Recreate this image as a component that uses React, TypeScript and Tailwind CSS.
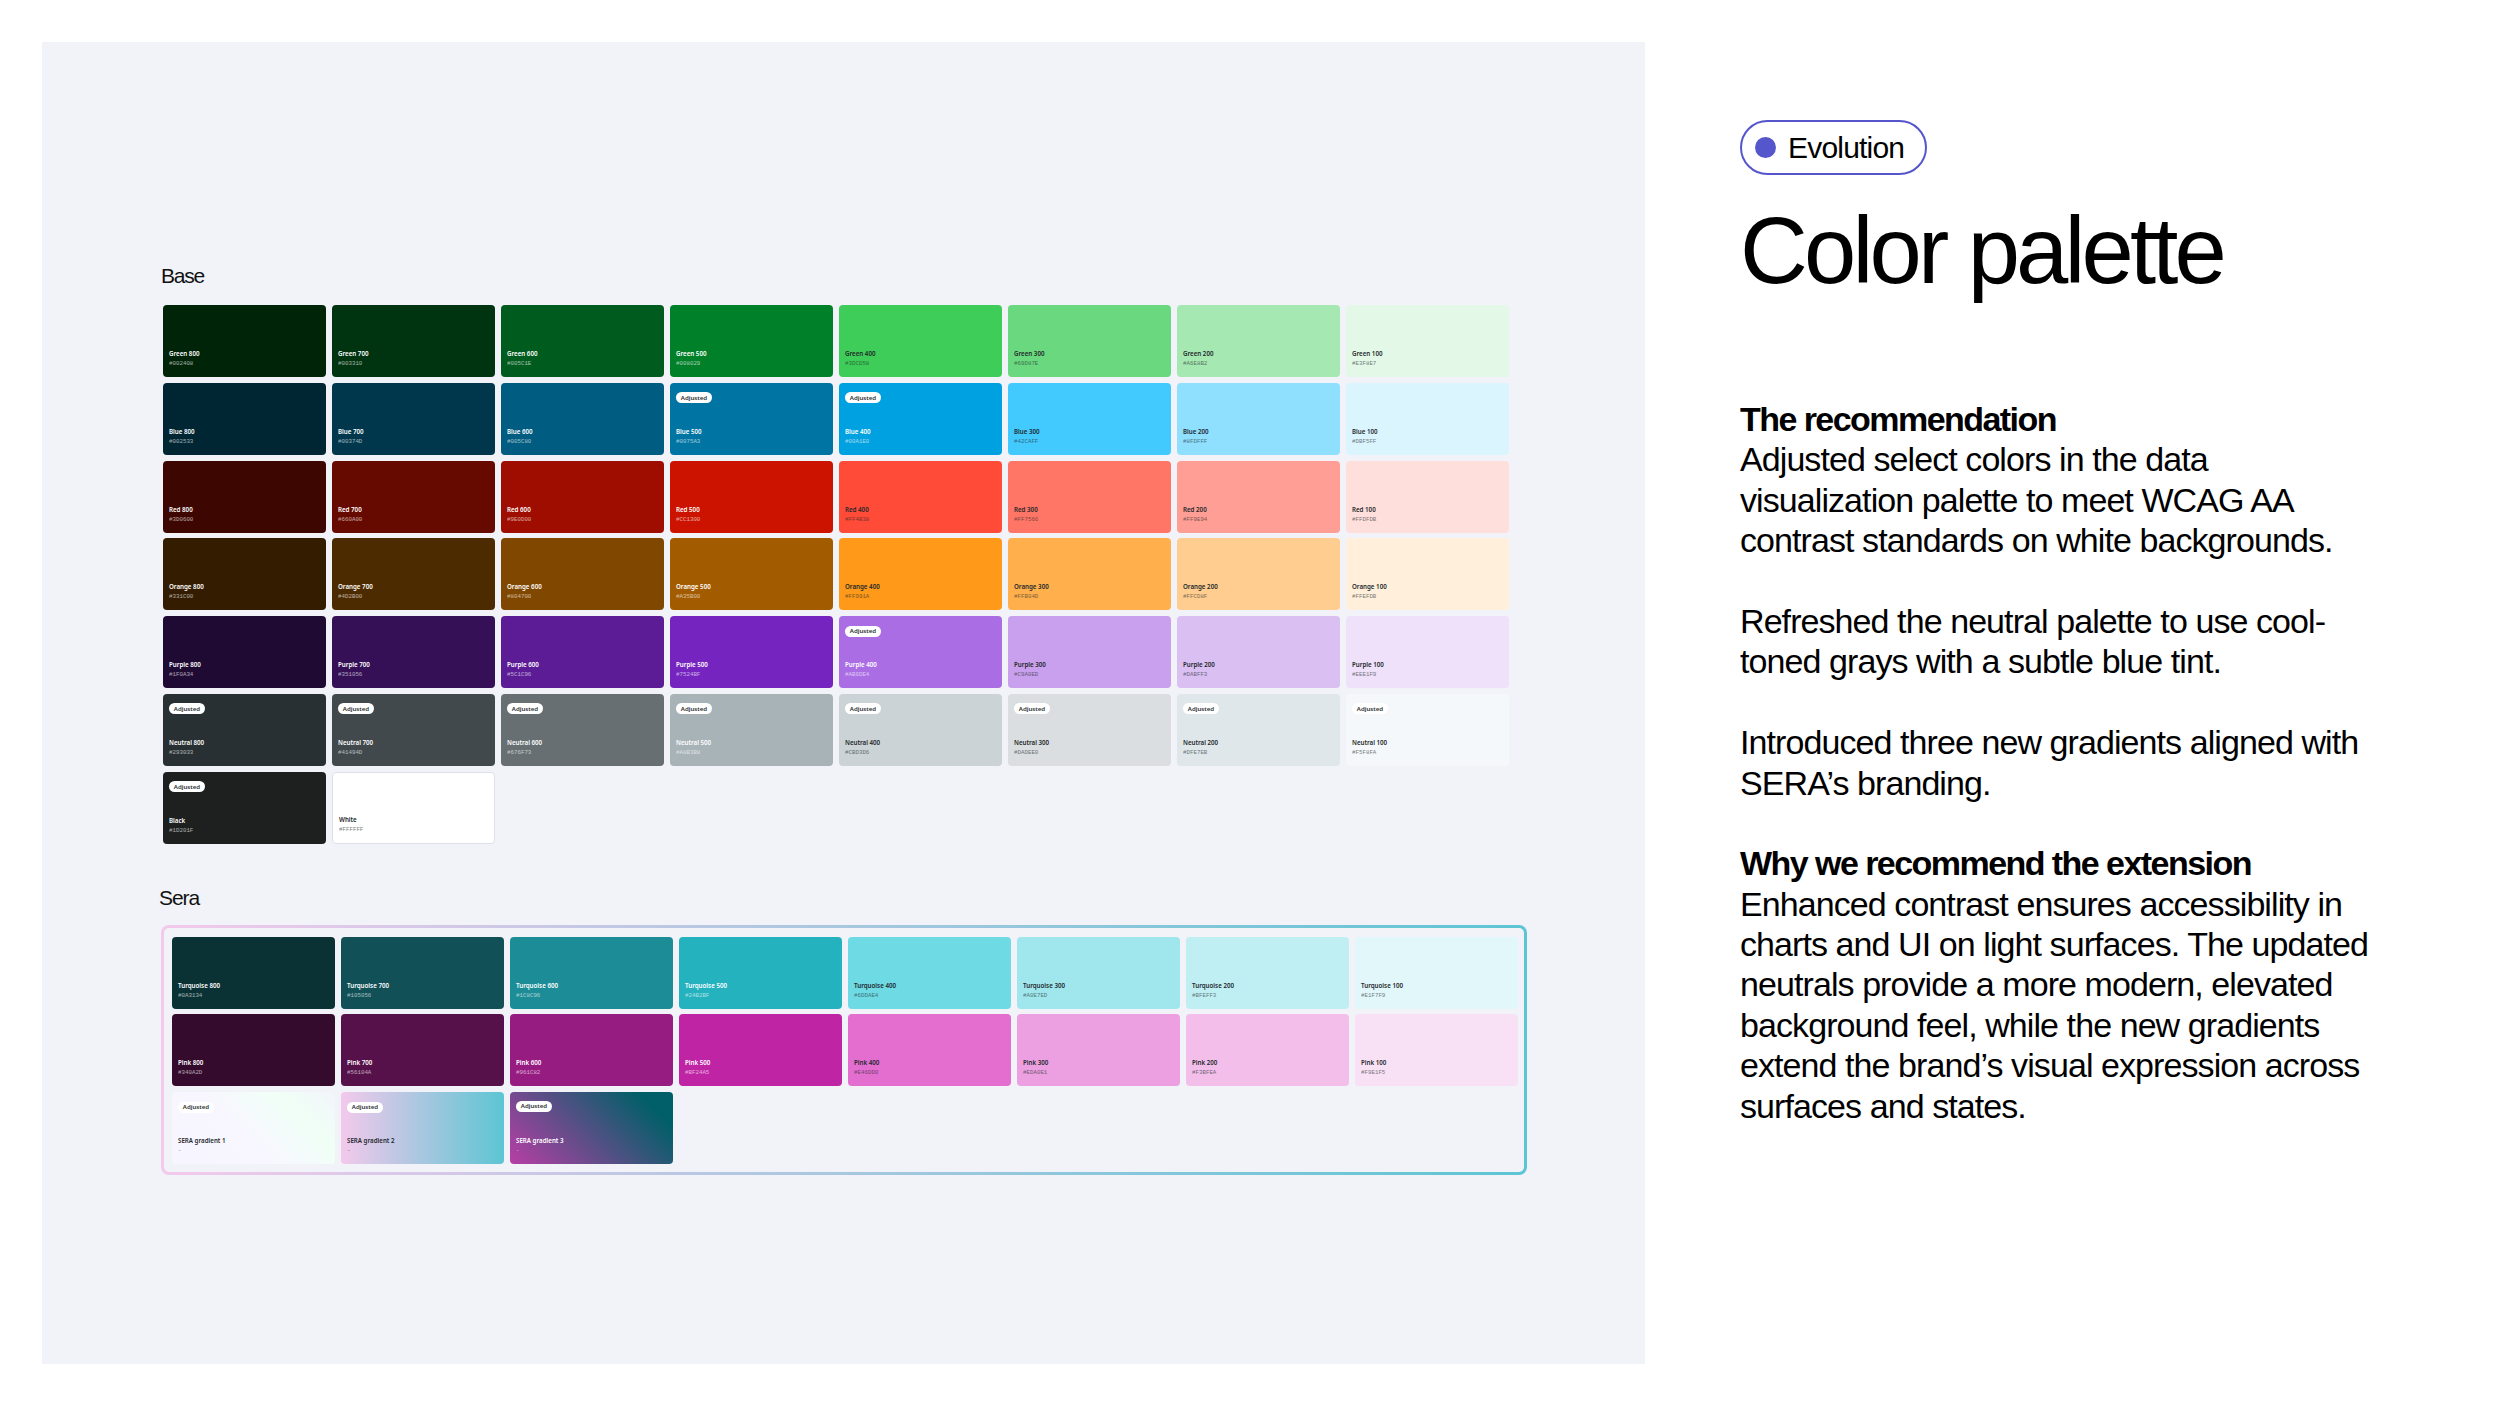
type S = { n: string; h: string; a?: boolean; g?: string };
const names = (p: string, hs: string[], adj: number[] = []): S[] =>
  hs.map((h, i) => ({ n: `${p} ${800 - i * 100}`, h, a: adj.includes(i) }));

const rows: S[][] = [
  names("Green", ["#002408", "#003310", "#005C1E", "#008029", "#3DCD58", "#69D87E", "#A6E8B2", "#E3F8E7"]),
  names("Blue", ["#002533", "#00374D", "#005C80", "#0075A3", "#00A1E0", "#42CAFF", "#8FDFFF", "#DBF5FF"], [3, 4]),
  names("Red", ["#3D0600", "#660A00", "#9E0D00", "#CC1300", "#FF4B38", "#FF7566", "#FF9E94", "#FFDFDB"]),
  names("Orange", ["#331C00", "#4D2B00", "#804700", "#A35B00", "#FF991A", "#FFB04D", "#FFCD8F", "#FFEFDB"]),
  names("Purple", ["#1F0A34", "#351056", "#5C1C96", "#7524BF", "#AB6DE4", "#C9A0ED", "#DABFF3", "#EEE1F9"], [4]),
  names("Neutral", ["#293033", "#41494D", "#676F73", "#A8B3B8", "#CBD3D6", "#DADEE0", "#DFE7EB", "#F5F8FA"], [0, 1, 2, 3, 4, 5, 6, 7]),
  [
    { n: "Black", h: "#1D201F", a: true },
    { n: "White", h: "#FFFFFF" },
  ],
];
const sera: S[][] = [
  names("Turquoise", ["#0A3134", "#105056", "#1C8C96", "#24B2BF", "#6DDAE4", "#A0E7ED", "#BFEFF3", "#E1F7F9"]),
  names("Pink", ["#340A2D", "#56104A", "#961C82", "#BF24A5", "#E46DD0", "#EDA0E1", "#F3BFEA", "#F9E1F5"]),
  [
    { n: "SERA gradient 1", h: "-", a: true, g: "bg-[linear-gradient(45deg,#f7f5ff_0%,#f8f7ff_45%,#f0fff6_75%,#f2f5fb_100%)]" },
    { n: "SERA gradient 2", h: "-", a: true, g: "bg-[linear-gradient(90deg,#f3c9ec_0%,#5cc5d3_100%)]" },
    { n: "SERA gradient 3", h: "-", a: true, g: "bg-[linear-gradient(45deg,#b83ea6_0%,#005f68_85%)]" },
  ],
];

const darkText = new Set([
  "Green 400", "Green 300", "Green 200", "Green 100", "Blue 300", "Blue 200", "Blue 100",
  "Red 400", "Red 300", "Red 200", "Red 100", "Orange 400", "Orange 300", "Orange 200", "Orange 100",
  "Purple 300", "Purple 200", "Purple 100", "Neutral 400", "Neutral 300", "Neutral 200", "Neutral 100",
  "White", "Turquoise 400", "Turquoise 300", "Turquoise 200", "Turquoise 100",
  "Pink 400", "Pink 300", "Pink 200", "Pink 100", "SERA gradient 1", "SERA gradient 2",
]);

function Swatch({ s }: { s: S }) {
  const dark = darkText.has(s.n);
  return (
    <div
      className={`relative flex h-[72px] w-[163px] shrink-0 flex-col rounded-[4px] pb-[8px] pl-[6px] font-['Noto_Sans',sans-serif] ${s.g ?? ""} ${s.n === "White" ? "border border-[#dde0e8]" : ""} ${dark ? "text-[#23282b]" : "text-white"}`}
      style={s.g ? undefined : { backgroundColor: s.h }}
    >
      {s.a && (
        <span
          className={`absolute left-[6px] flex h-[11px] w-[36px] items-center justify-center rounded-full bg-white text-[6.1px] font-semibold text-[#2a2e30] ${s.n === "SERA gradient 3" ? "top-[8.5px]" : "top-[9.5px]"}`}
        >
          Adjusted
        </span>
      )}
      <span className="mt-auto whitespace-nowrap text-[6.2px] font-semibold leading-[10px]">{s.n}</span>
      <span className="font-['Liberation_Mono',monospace] text-[5.8px] leading-[10px] opacity-60">{s.h}</span>
    </div>
  );
}

function Grid({ data }: { data: S[][] }) {
  return (
    <div className="flex flex-col gap-y-[5.75px]">
      {data.map((r, i) => (
        <div key={i} className="flex gap-x-[6px]">
          {r.map((s) => (
            <Swatch key={s.n} s={s} />
          ))}
        </div>
      ))}
    </div>
  );
}

const body: { t: string; b?: boolean }[] = [
  { t: "The recommendation", b: true },
  { t: "Adjusted select colors in the data" },
  { t: "visualization palette to meet WCAG AA" },
  { t: "contrast standards on white backgrounds." },
  { t: "" },
  { t: "Refreshed the neutral palette to use cool-" },
  { t: "toned grays with a subtle blue tint." },
  { t: "" },
  { t: "Introduced three new gradients aligned with" },
  { t: "SERA’s branding." },
  { t: "" },
  { t: "Why we recommend the extension", b: true },
  { t: "Enhanced contrast ensures accessibility in" },
  { t: "charts and UI on light surfaces. The updated" },
  { t: "neutrals provide a more modern, elevated" },
  { t: "background feel, while the new gradients" },
  { t: "extend the brand’s visual expression across" },
  { t: "surfaces and states." },
];

export default function App() {
  return (
    <div className="flex h-[1406px] w-[2500px] overflow-hidden bg-white pl-[42px] pt-[42px] font-['Liberation_Sans',sans-serif] text-black">
      <div className="h-[1322px] w-[1603px] shrink-0 bg-[#f1f3f8] pt-[221px]">
        <div className="ml-[119px] text-[21px] leading-[26px] tracking-[-1.2px] text-[#111]">Base</div>
        <div className="ml-[121px] mt-[16px]">
          <Grid data={rows} />
        </div>
        <div className="ml-[117px] mt-[41px] text-[21px] leading-[26px] tracking-[-1.1px] text-[#111]">Sera</div>
        <div className="ml-[118.5px] mt-[14px] h-[250px] w-[1366px] rounded-[8px] bg-[linear-gradient(90deg,#f3c9ec_0%,#5cc5d3_100%)] p-[3px]">
          <div className="h-full w-full rounded-[5px] bg-[#f1f3f8] pl-[8.5px] pt-[9px]">
            <Grid data={sera} />
          </div>
        </div>
      </div>
      <div className="ml-[95px] flex flex-col items-start">
        <div className="mt-[78px] flex h-[55px] w-[187px] items-center rounded-full border-[2.5px] border-[#5555cc] pl-[13px]">
          <span className="h-[21px] w-[21px] rounded-full bg-[#5555cc]" />
          <span className="ml-[12px] text-[30px] tracking-[-0.8px]">Evolution</span>
        </div>
        <h1 className="mt-[23px] whitespace-nowrap text-[94px] leading-[105px] tracking-[-3.85px]">Color palette</h1>
        <div className="mt-[96px] text-[34px] leading-[40.4px] tracking-[-0.92px]">
          {body.map((l, i) => (
            <div key={i} className={`h-[40.4px] whitespace-nowrap ${l.b ? "font-bold tracking-[-1.55px]" : ""}`}>
              {l.t}
            </div>
          ))}
        </div>
      </div>
    </div>
  );
}
